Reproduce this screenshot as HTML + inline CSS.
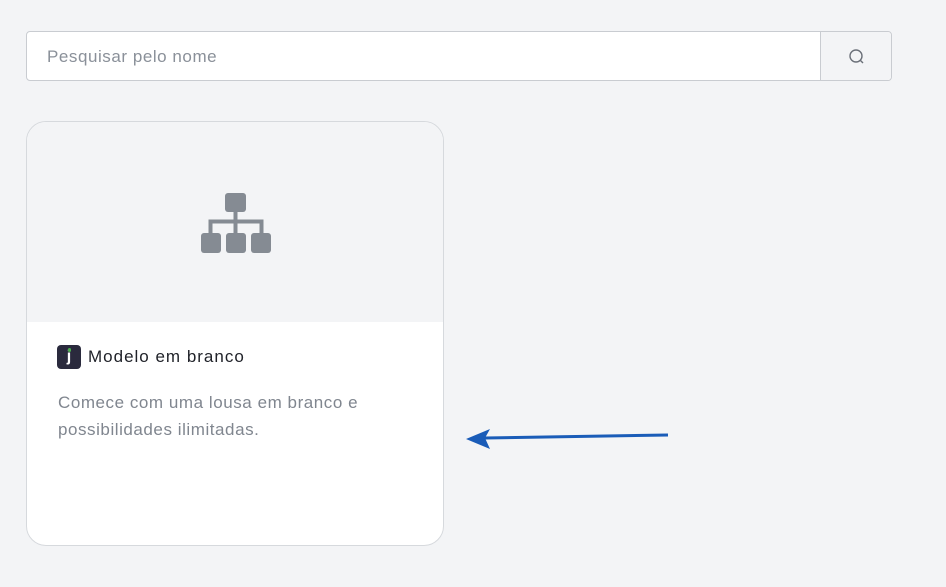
<!DOCTYPE html>
<html><head><style>
body{margin:0;width:946px;height:587px;background:#f3f4f6;font-family:"Liberation Sans",sans-serif;position:relative;overflow:hidden}
.search{position:absolute;left:26px;top:31px;width:864px;height:48px;border:1px solid #c9ccd1;border-radius:4px;background:#fff;box-sizing:content-box}
.search .ph{position:absolute;left:20px;top:15px;font-size:17px;color:#8a9099;letter-spacing:0.55px}
.search .btn{position:absolute;right:0;top:0;width:70px;height:48px;border-left:1px solid #c9ccd1;background:#f3f4f6;border-radius:0 4px 4px 0}
.card{position:absolute;left:26px;top:121px;width:416px;height:423px;border:1px solid #d6d9dd;border-radius:20px;background:#fff;overflow:hidden}
.top{height:200px;background:#f3f4f6}
.title{position:absolute;left:30px;top:223px;font-size:17px;color:#1f2128;display:flex;align-items:center;letter-spacing:1px}
.logo{width:24px;height:24px;border-radius:4px;background:#2a2a3d;margin-right:7px;color:#fff;font-weight:bold;font-size:16px;text-align:center;line-height:24px;position:relative;letter-spacing:0}
.desc{position:absolute;left:31px;top:267px;font-size:17px;line-height:27px;color:#80868f;letter-spacing:0.55px}
</style></head><body>
<div class="search"><div class="ph">Pesquisar pelo nome</div><div class="btn">
<svg width="70" height="48"><circle cx="35" cy="24" r="6" fill="none" stroke="#6b7079" stroke-width="1.4"/><line x1="39.5" y1="28.5" x2="42" y2="31" stroke="#6b7079" stroke-width="1.4"/></svg></div></div>
<div class="card"><div class="top">
<svg width="416" height="200" style="display:block"><g fill="#858b93" transform="translate(-26,-121)">
<rect x="224" y="192" width="21" height="19" rx="3"/>
<rect x="200" y="232" width="20" height="20" rx="3"/>
<rect x="225" y="232" width="20" height="20" rx="3"/>
<rect x="250" y="232" width="20" height="20" rx="3"/>
<rect x="232.5" y="210" width="4" height="12"/>
<rect x="207.5" y="218.5" width="55" height="4"/>
<rect x="207.5" y="218.5" width="4" height="14"/>
<rect x="232.5" y="218.5" width="4" height="14"/>
<rect x="258.5" y="218.5" width="4" height="14"/>
</g></svg></div>
<div class="title"><div class="logo">j<span style="position:absolute;left:11px;top:3px;width:3px;height:4px;background:#4caf50;border-radius:2px"></span></div>Modelo em branco</div>
<div class="desc">Comece com uma lousa em branco e<br>possibilidades ilimitadas.</div>
</div>
<svg style="position:absolute;left:0;top:0" width="946" height="587">
<path d="M668 435 L485 438" stroke="#1a5cb8" stroke-width="3" fill="none"/>
<path d="M466 439 L490 429 L485 438 L490 449 Z" fill="#1a5cb8"/>
</svg>
</body></html>
